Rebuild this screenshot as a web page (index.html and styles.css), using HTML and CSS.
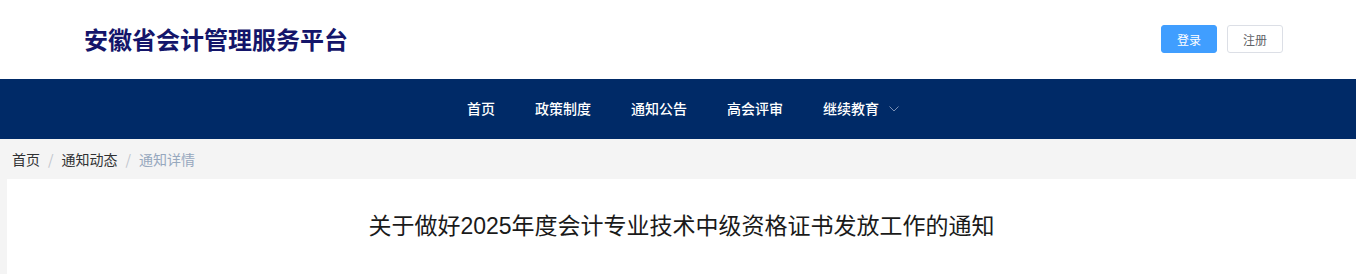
FILE: index.html
```html
<!DOCTYPE html>
<html lang="zh-CN">
<head>
<meta charset="utf-8">
<title>安徽省会计管理服务平台</title>
<link rel="stylesheet" href="styles.css">
</head>
<body>
<header class="top">
  <div class="logo">安徽省会计管理服务平台</div>
  <div class="actions">
    <button class="btn btn-primary">登录</button>
    <button class="btn btn-plain">注册</button>
  </div>
</header>
<nav class="nav">
  <a class="nav-item">首页</a>
  <a class="nav-item">政策制度</a>
  <a class="nav-item">通知公告</a>
  <a class="nav-item">高会评审</a>
  <a class="nav-item has-sub">继续教育
    <svg class="chev" width="10" height="6" viewBox="0 0 10 6"><path d="M0.5 0.5 L5 5 L9.5 0.5" fill="none" stroke="#7a8fb3" stroke-width="1"/></svg>
  </a>
</nav>
<main class="main">
  <div class="crumbs">
    <span class="crumb">首页</span><span class="sep">/</span><span class="crumb">通知动态</span><span class="sep">/</span><span class="crumb current">通知详情</span>
  </div>
  <section class="card">
    <h1 class="title">关于做好2025年度会计专业技术中级资格证书发放工作的通知</h1>
  </section>
</main>
</body>
</html>
```
FILE: styles.css
```css
* { box-sizing: border-box; }
html, body { margin: 0; padding: 0; }
body {
  font-family: "Liberation Sans", Arial, "Noto Sans CJK SC", sans-serif;
  background: #f4f4f4;
  width: 1356px;
  overflow: hidden;
}
.top {
  height: 79px;
  background: #fff;
  display: flex;
  align-items: center;
  justify-content: space-between;
  padding: 0 73px 0 84px;
}
.logo {
  font-size: 24px;
  font-weight: bold;
  color: #14156a;
  letter-spacing: 0;
  font-family: "Noto Sans CJK SC", sans-serif;
  margin-top: -2px;
}
.actions { display: flex; gap: 10px; margin-top: -1px; }
.btn {
  width: 56px;
  height: 28px;
  font-size: 12px;
  border-radius: 3px;
  font-family: "Noto Sans CJK SC", sans-serif;
  padding: 0;
  cursor: pointer;
}
.btn-primary { background: #409eff; border: 1px solid #409eff; color: #fff; }
.btn-plain { background: #fff; border: 1px solid #dcdfe6; color: #606266; }
.nav {
  height: 60px;
  background: #002a67;
  display: flex;
  justify-content: center;
  align-items: center;
  padding-right: 10px;
}
.nav-item {
  color: #fff;
  font-size: 14px;
  font-weight: 500;
  padding: 0 20px;
  font-family: "Noto Sans CJK SC", sans-serif;
  display: flex;
  align-items: center;
  line-height: 60px;
  margin-top: -3px;
}
.nav-item.has-sub { padding-right: 0; }
.chev { margin-left: 10px; margin-top: 3px; }
.crumbs {
  height: 40px;
  display: flex;
  align-items: center;
  padding-left: 12px;
  font-size: 14px;
  font-family: "Noto Sans CJK SC", sans-serif;
  color: #303133;
}
.sep { color: #c0c4cc; margin: 0 8px; }
.crumb.current { color: #97a8be; }
.card {
  background: #fff;
  margin-left: 7px;
  height: 100px;
  padding-top: 32px;
}
.title {
  margin: 0;
  text-align: center;
  font-weight: normal;
  font-size: 23px;
  color: #1a1a1a;
  line-height: 30px;
  font-family: "Liberation Sans", Arial, "Noto Sans CJK SC", sans-serif;
}
```
